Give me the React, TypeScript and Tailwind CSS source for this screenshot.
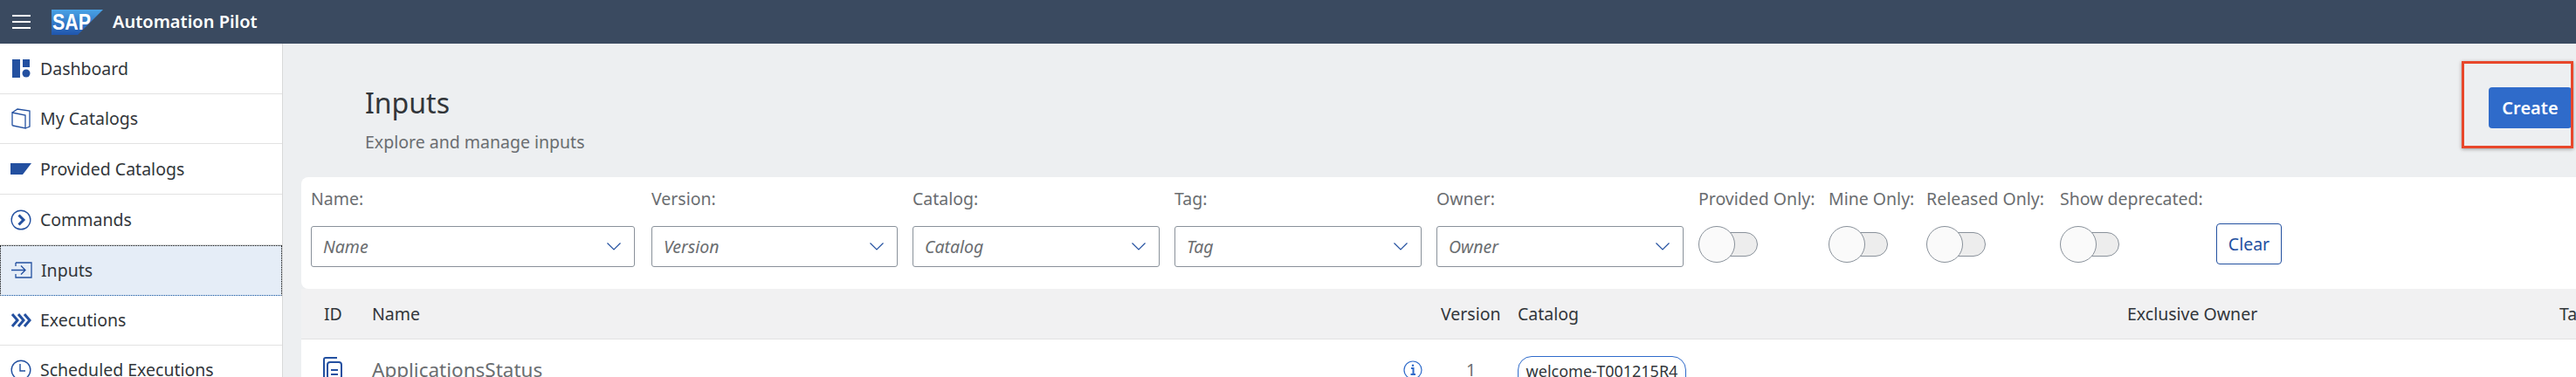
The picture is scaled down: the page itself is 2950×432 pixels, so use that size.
const ICON = "#2350a0"

function DashboardIcon() {
  return (
    <svg width="22" height="22" viewBox="0 0 22 22" fill={ICON}>
      <rect x="1" y="0" width="9" height="21" />
      <rect x="13" y="0" width="8" height="9" />
      <circle cx="17" cy="16" r="4.5" />
    </svg>
  )
}

function BookIcon() {
  return (
    <svg width="24" height="24" viewBox="0 0 24 24" fill="none" stroke={ICON} strokeWidth="1.3">
      <path d="M2 5 L17 8 V23 L3 20 Q2 20 2 19 Z" />
      <path d="M2 5 L8 1 L22 3 V21 L17 23" />
    </svg>
  )
}

function ProvidedIcon() {
  return (
    <svg width="24" height="14" viewBox="0 0 24 14" fill={ICON}>
      <path d="M0 0 H24 L14 13 H0 Z" />
    </svg>
  )
}

function CommandsIcon() {
  return (
    <svg width="24" height="24" viewBox="0 0 24 24" fill="none" stroke={ICON}>
      <circle cx="12" cy="12" r="10.8" strokeWidth="1.4" />
      <path d="M9.5 6.5 L15 12 L9.5 17.5" strokeWidth="3" />
    </svg>
  )
}

function InputsIcon() {
  return (
    <svg width="24" height="20" viewBox="0 0 24 20" fill="none" stroke={ICON} strokeWidth="1.3">
      <path d="M5 1 H23 V18 H5 V14" />
      <path d="M5 1 V5" />
      <path d="M0 9.5 H16 M11 4.5 L16 9.5 L11 14.5" />
    </svg>
  )
}

function ExecutionsIcon() {
  return (
    <svg width="24" height="18" viewBox="0 0 24 18" fill="none" stroke={ICON} strokeWidth="3">
      <path d="M2 2 L8 9 L2 16 M9 2 L15 9 L9 16 M16 2 L22 9 L16 16" />
    </svg>
  )
}

function ClockIcon() {
  return (
    <svg width="24" height="24" viewBox="0 0 24 24" fill="none" stroke={ICON} strokeWidth="1.4">
      <circle cx="12" cy="12" r="10.8" />
      <path d="M11 5 V13 H17" />
    </svg>
  )
}

function SapLogo() {
  return (
    <svg width="59" height="29" viewBox="0 0 59 29">
      <defs>
        <linearGradient id="sapBlue" x1="0" y1="0" x2="0" y2="1">
          <stop offset="0" stopColor="#4aa3e6" />
          <stop offset="1" stopColor="#1f55ad" />
        </linearGradient>
      </defs>
      <path d="M0 0 H59 L30 29 H0 Z" fill="url(#sapBlue)" />
      <text
        x="1"
        y="23"
        fill="#ffffff"
        fontSize="25"
        fontWeight="700"
        fontFamily="'Liberation Sans', sans-serif"
        textLength="44"
        lengthAdjust="spacingAndGlyphs"
      >
        SAP
      </text>
    </svg>
  )
}

const navItems = [
  { label: "Dashboard", icon: <DashboardIcon />, height: "h-[58px]" },
  { label: "My Catalogs", icon: <BookIcon />, height: "h-[57px]" },
  { label: "Provided Catalogs", icon: <ProvidedIcon />, height: "h-[58px]" },
  { label: "Commands", icon: <CommandsIcon />, height: "h-[58px]" },
  { label: "Inputs", icon: <InputsIcon />, height: "h-[58px]", active: true },
  { label: "Executions", icon: <ExecutionsIcon />, height: "h-[57px]" },
  { label: "Scheduled Executions", icon: <ClockIcon />, height: "h-[57px]" },
]

function NavRow({ label, icon, height, active }: { label: string; icon: React.ReactNode; height: string; active?: boolean }) {
  return (
    <div
      className={`${height} shrink-0 flex items-center ${
        active
          ? "bg-[#e5edf7] border border-dotted border-black border-b-[#0a4f9e]"
          : "border-b border-[#e2e2e2]"
      }`}
    >
      <span className="w-[46px] shrink-0 flex justify-center pl-[2px]">{icon}</span>
      <span className="text-[19.5px] text-[#32363a]">{label}</span>
    </div>
  )
}

function FilterSelect({ label, width }: { label: string; width: string }) {
  return (
    <div className={`${width} shrink-0 flex flex-col`}>
      <span className="text-[19.5px] leading-[28px] text-[#6a6d70] mb-[17px]">{label}:</span>
      <div className="h-[47px] flex items-center justify-between pl-[13px] pr-[15px] bg-white border border-[#89919a] rounded-[3px]">
        <span className="text-[19.5px] italic text-[#6a6d70]">{label}</span>
        <svg width="16" height="9" viewBox="0 0 16 9" fill="none" stroke={ICON} strokeWidth="1.2">
          <path d="M0.5 0.5 L8 8 L15.5 0.5" />
        </svg>
      </div>
    </div>
  )
}

function FilterToggle({ label, width }: { label: string; width: string }) {
  return (
    <div className={`${width} shrink-0 flex flex-col`}>
      <span className="text-[19.5px] leading-[28px] text-[#6a6d70] whitespace-nowrap mb-[17px]">{label}:</span>
      <div className="relative w-[68px] h-[42px] flex items-center">
        <div className="ml-[20px] w-[48px] h-[28px] bg-[#ededed] border border-[#89919a] rounded-full" />
        <div className="absolute left-0 top-0 w-[42px] h-[42px] bg-[#fafafa] border border-[#89919a] rounded-full" />
      </div>
    </div>
  )
}

export default function App() {
  return (
    <div className="h-screen flex flex-col overflow-hidden bg-[#edeff1] font-['Noto_Sans',sans-serif]">
      <header className="h-[50px] shrink-0 flex items-center bg-[#3a4a60]">
        <div className="w-[21px] ml-[14px] flex flex-col gap-[5px]">
          <span className="h-[2px] bg-white" />
          <span className="h-[2px] bg-white" />
          <span className="h-[2px] bg-white" />
        </div>
        <span className="ml-[24px] flex">
          <SapLogo />
        </span>
        <span className="ml-[11px] text-[20px] font-semibold text-white">Automation Pilot</span>
      </header>

      <div className="flex-1 flex min-h-0">
        <nav className="w-[324px] shrink-0 flex flex-col bg-white border-r border-[#d9d9d9] overflow-hidden">
          {navItems.map((item) => (
            <NavRow key={item.label} {...item} />
          ))}
        </nav>

        <main className="flex-1 min-w-0 flex flex-col pl-[21px]">
          <div className="relative h-[153px] shrink-0 flex items-center justify-between pl-[73px] pr-[5px]">
            <div className="flex flex-col mt-[22px]">
              <h1 className="text-[32px] leading-[40px] text-[#32363a]">Inputs</h1>
              <p className="mt-[11px] text-[19.5px] leading-[28px] text-[#6a6d70]">Explore and manage inputs</p>
            </div>
            <button className="w-[95px] h-[47px] mb-[6px] bg-[#2f6bca] rounded-[4px] text-[20px] font-semibold text-white">
              Create
            </button>
            {/* Annotation box over the button */}
            <div className="absolute left-[2474px] top-[20px] w-[128px] h-[100px] border-[3px] border-[#e8472b] shadow-[0_1px_4px_rgba(0,0,0,0.35)]" />
          </div>

          <section className="h-[128px] shrink-0 flex pt-[11px] pl-[11px] gap-[17px] bg-white rounded-tl-[8px] rounded-bl-[8px]">
            <div className="w-[373px] shrink-0 pr-[2px] flex">
              <FilterSelect label="Name" width="w-[371px]" />
            </div>
            <FilterSelect label="Version" width="w-[282px]" />
            <FilterSelect label="Catalog" width="w-[283px]" />
            <FilterSelect label="Tag" width="w-[283px]" />
            <FilterSelect label="Owner" width="w-[283px]" />
            <FilterToggle label="Provided Only" width="w-[132px]" />
            <FilterToggle label="Mine Only" width="w-[95px]" />
            <FilterToggle label="Released Only" width="w-[136px]" />
            <FilterToggle label="Show deprecated" width="w-[162px]" />
            <button className="self-start mt-[42px] w-[75px] h-[47px] bg-white border border-[#2350a0] rounded-[4px] text-[19.5px] text-[#2350a0]">
              Clear
            </button>
          </section>

          <div className="h-[58px] shrink-0 grid grid-cols-[81px_1224px_88px_698px_495px_1fr] items-center bg-[#f1f1f2] border-b border-[#e2e2e2] text-[19.5px] text-[#32363a]">
            <span className="pl-[26px]">ID</span>
            <span>Name</span>
            <span>Version</span>
            <span>Catalog</span>
            <span>Exclusive Owner</span>
            <span className="whitespace-nowrap">Ta</span>
          </div>

          <div className="h-[80px] shrink-0 grid grid-cols-[81px_1224px_88px_698px_495px_1fr] items-start bg-white pt-[20px]">
            <span className="pl-[25px] flex">
              <svg width="22" height="26" viewBox="0 0 22 26" fill="none" stroke={ICON} strokeWidth="2">
                <path d="M1 24 V3 Q1 1 3 1 H16" />
                <rect x="5" y="6" width="16" height="19" rx="3" />
                <path d="M9 15 H17 M9 20 H17" />
              </svg>
            </span>
            <span className="flex items-center justify-between pr-[21px]">
              <span className="text-[22.5px] leading-[30px] text-[#6a6d70]">ApplicationsStatus</span>
              <svg width="22" height="22" viewBox="0 0 22 22" fill="none" stroke="#2f6bca" strokeWidth="1.2">
                <circle cx="11" cy="11" r="10" />
                <path d="M9 9 H11.5 V16 M8.5 16 H14" strokeWidth="2" />
                <circle cx="11" cy="5.8" r="1.2" fill="#2f6bca" stroke="none" />
              </svg>
            </span>
            <span className="pl-[29px] text-[19.5px] leading-[30px] text-[#6a6d70]">1</span>
            <span className="flex -mt-[1px]">
              <span className="w-[193px] h-[40px] flex justify-center pt-[3px] border border-[#2f6bca] rounded-[16px] text-[18px] text-[#32363a]">
                welcome-T001215R4
              </span>
            </span>
          </div>
        </main>
      </div>
    </div>
  )
}
